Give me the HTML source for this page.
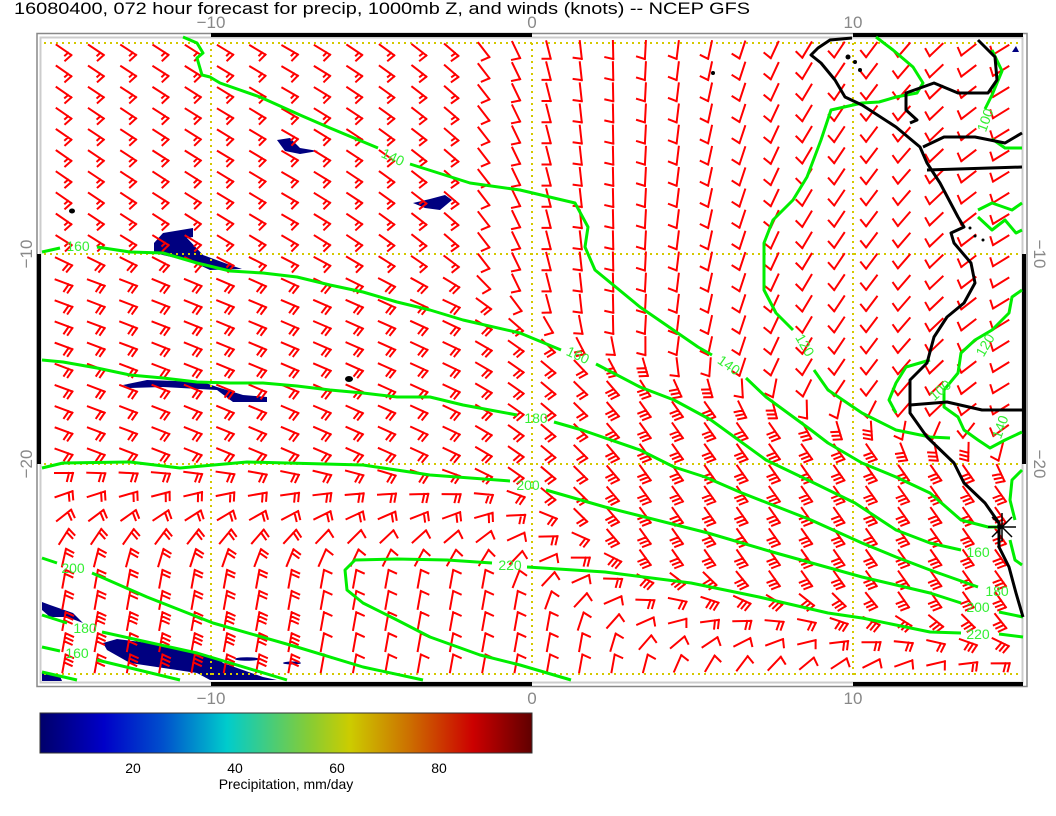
<!DOCTYPE html>
<html><head><meta charset="utf-8">
<style>
html,body{margin:0;padding:0;background:#fff;}
svg{display:block;font-family:"Liberation Sans",Arial,sans-serif;}
</style></head>
<body>
<svg id="s" width="1056" height="816" viewBox="0 0 1056 816" xmlns="http://www.w3.org/2000/svg">
<defs>
<linearGradient id="cb" x1="0" x2="1" y1="0" y2="0">
<stop offset="0" stop-color="#00006a"/>
<stop offset="0.13" stop-color="#0000c8"/>
<stop offset="0.25" stop-color="#0050cc"/>
<stop offset="0.38" stop-color="#00cccc"/>
<stop offset="0.48" stop-color="#50cc70"/>
<stop offset="0.55" stop-color="#88cc33"/>
<stop offset="0.63" stop-color="#cccc00"/>
<stop offset="0.75" stop-color="#cc7000"/>
<stop offset="0.88" stop-color="#cc0000"/>
<stop offset="1" stop-color="#600000"/>
</linearGradient>
</defs>
<rect width="1056" height="816" fill="#fff"/>
<text x="14" y="14" font-size="17" textLength="736" lengthAdjust="spacingAndGlyphs">16080400, 072 hour forecast for precip, 1000mb Z, and winds (knots) -- NCEP GFS</text>

<rect x="37" y="33.5" width="990" height="653" fill="none" stroke="#888" stroke-width="1.5"/>
<rect x="40.5" y="37.5" width="982" height="645" fill="none" stroke="#ccc" stroke-width="2"/>
<g fill="#000">
<rect x="211" y="33" width="321" height="4"/>
<rect x="853" y="33" width="170" height="4"/>
<rect x="211" y="682" width="321" height="4"/>
<rect x="853" y="682" width="170" height="4"/>
<rect x="37" y="254" width="4" height="210"/>
<rect x="1022" y="254" width="4" height="210"/>
</g>
<g fill="#888" font-size="17" text-anchor="middle">
<text x="211" y="28">−10</text><text x="532" y="28">0</text><text x="853" y="28">10</text>
<text x="211" y="704">−10</text><text x="532" y="704">0</text><text x="853" y="704">10</text>
<text transform="translate(32,254) rotate(-90)">−10</text>
<text transform="translate(32,464) rotate(-90)">−20</text>
<text transform="translate(1034,254) rotate(90)">−10</text>
<text transform="translate(1034,464) rotate(90)">−20</text>
</g>

<g fill="#000080">
<polygon points="277,140 290,138 300,148 318,151 300,154 285,151"/>
<polygon points="413,203 430,199 445,195 452,200 440,210 425,208"/>
<polygon points="154,243 163,233 193,228 193,237 187,238 203,255 230,265 242,269 210,270 193,262 154,253"/>
<polygon points="123,385 147,380 203,382 217,387 243,395 267,397 267,402 233,402 217,390 163,387 130,388"/>
<polygon points="103,643 117,639 163,645 220,660 223,663 263,677 277,680 210,680 197,673 130,663 107,650"/>
<polygon points="42,602 50,605 73,613 83,623 67,617 50,617 42,610"/>
<ellipse cx="247" cy="659" rx="12" ry="1.8"/>
<ellipse cx="292" cy="663" rx="9" ry="1.5"/>
<polygon points="42,672 60,676 62,681 42,681"/>
<ellipse cx="349" cy="379" rx="4" ry="3" fill="#000"/>
<ellipse cx="72" cy="211" rx="3" ry="2.5" fill="#000"/>
<polygon points="1012,52 1016,46 1019,52"/>
</g>

<g stroke="#d4c800" stroke-width="2" stroke-dasharray="2,4" fill="none">
<line x1="44" y1="43" x2="1020" y2="43"/>
<line x1="44" y1="254" x2="1020" y2="254"/>
<line x1="44" y1="464" x2="1020" y2="464"/>
<line x1="44" y1="674" x2="1020" y2="674"/>
<line x1="211" y1="43" x2="211" y2="676"/>
<line x1="532" y1="43" x2="532" y2="676"/>
<line x1="853" y1="43" x2="853" y2="676"/>
</g>

<g id="barbs" stroke="#ff0000" stroke-width="2" fill="none" stroke-linecap="square"></g>

<g stroke="#00ee00" stroke-width="3" fill="none" stroke-linejoin="round">
<polyline points="183,37 197,43 203,53 197,58 202,75 210,77 220,83 260,97 300,115 330,128 378,148"/>
<polyline points="410,164 470,183 520,190 575,203 588,227 585,247 595,270 640,307 698,347 712,355"/>
<polyline points="746,378 766,397 811,430 828,443 862,463 896,477 930,493 961,520 988,527 999,527"/>
<polyline points="876,37 893,50 913,67 923,83 917,93 896,97 879,102 862,103 831,110 821,140 807,177 793,200 773,220 764,243 764,290 776,313 793,330"/>
<polyline points="814,370 828,390 862,413 896,430 930,437 950,438"/>
<polyline points="42,252 60,248"/>
<polyline points="97,247 130,252 163,253 197,263 230,271 263,273 297,277 330,285 363,292 397,302 430,310 463,320 520,333 561,350"/>
<polyline points="596,364 640,387 674,400 711,420 766,460 814,483 855,503 896,530 930,543 961,550"/>
<polyline points="42,360 63,362 97,368 130,375 163,378 197,382 230,383 263,383 297,386 330,390 363,393 397,397 430,397 463,405 517,415"/>
<polyline points="554,422 582,430 640,450 674,467 705,477 742,493 811,520 862,543 896,557 930,570 978,587"/>
<polyline points="42,468 63,463 130,462 180,468 247,462 363,465 430,475 510,481"/>
<polyline points="546,490 605,507 708,533 776,553 862,577 930,593 961,603"/>
<polyline points="999,612 1023,617"/>
<polyline points="492,563 447,560 397,559 355,560 345,570 347,590 363,603 397,620 430,637 480,655 520,665 571,680"/>
<polyline points="527,567 605,572 691,583 759,597 828,613 862,618 930,632 961,633"/>
<polyline points="999,634 1023,637"/>
<polyline points="42,558 57,563"/>
<polyline points="92,573 147,597 213,623 297,647 363,667 423,680"/>
<polyline points="42,615 67,623"/>
<polyline points="102,632 197,653 287,680"/>
<polyline points="42,647 60,651"/>
<polyline points="97,660 180,680"/>
<polyline points="42,672 77,680"/>
<polyline points="992,50 1002,71 992,95 985,109"/>
<polyline points="992,139 1005,148 1022,148"/>
<polyline points="978,210 992,203 1012,210 1022,203"/>
<polyline points="978,217 992,230 1005,220 1016,233 1022,230"/>
<polyline points="1022,290 1012,297 1009,313 992,330 975,340 961,353 958,373 944,390 944,407 958,417 964,430 978,440 990,448 1005,440 1022,432"/>
<polyline points="930,360 906,367 896,383 889,400 896,413"/>
<polyline points="1022,470 1012,480 1010,500 1015,520"/>
<polyline points="1010,540 1015,560 1022,565"/>
</g>
<g fill="#33ee33" font-size="14" text-anchor="middle">
<text x="393" y="162" transform="rotate(25 393 157)">140</text>
<text x="729" y="370" transform="rotate(35 729 365)">140</text>
<text x="805" y="350" transform="rotate(60 805 345)">120</text>
<text x="78" y="251">160</text>
<text x="578" y="360" transform="rotate(25 578 355)">160</text>
<text x="978" y="557">160</text>
<text x="536" y="423">180</text>
<text x="997" y="596">180</text>
<text x="528" y="490">200</text>
<text x="978" y="612">200</text>
<text x="510" y="570">220</text>
<text x="978" y="639">220</text>
<text x="73" y="573">200</text>
<text x="85" y="633">180</text>
<text x="77" y="658">160</text>
<text x="985" y="125" transform="rotate(-70 985 120)">100</text>
<text x="985" y="350" transform="rotate(-60 985 345)">120</text>
<text x="940" y="395" transform="rotate(-40 940 390)">100</text>
<text x="1000" y="432" transform="rotate(-70 1000 427)">140</text>
</g>

<g stroke="#000" stroke-width="3" fill="none" stroke-linejoin="round">
<polyline points="852,38 830,40 818,48 811,55 821,63 835,80 845,97 862,105 896,127 920,147 927,163 940,183 958,217 964,227 951,233 954,243 971,263 975,283 964,303 947,317 934,337 927,363 910,380 910,413 927,437 954,463 964,483 985,503 999,523 999,547 1009,567 1016,593 1023,617"/>
<polyline points="978,40 995,57 997,80 988,93 958,93 934,83 906,93 906,110 917,120 910,123"/>
<polyline points="927,170 1022,167"/>
<polyline points="923,147 944,137 975,137 1005,143 1022,133"/>
<polyline points="910,405 947,402 982,410 1022,410"/>
</g>
<g fill="#000">
<circle cx="848" cy="57" r="2.5"/><circle cx="855" cy="62" r="2"/><circle cx="860" cy="70" r="2"/><circle cx="713" cy="73" r="2"/>
<circle cx="970" cy="228" r="1.5"/><circle cx="975" cy="236" r="1.5"/><circle cx="983" cy="240" r="1.5"/>
</g>
<g stroke="#000" stroke-width="1.5">
<line x1="988" y1="527" x2="1016" y2="527"/><line x1="1002" y1="513" x2="1002" y2="541"/>
<line x1="992" y1="517" x2="1012" y2="537"/><line x1="992" y1="537" x2="1012" y2="517"/>
</g>

<rect x="40" y="713" width="492" height="40" fill="url(#cb)" stroke="#333" stroke-width="1"/>
<g font-size="14" text-anchor="middle" fill="#000">
<text x="133" y="773">20</text><text x="235" y="773">40</text><text x="337" y="773">60</text><text x="439" y="773">80</text>
<text x="286" y="789">Precipitation, mm/day</text>
</g>
</svg>
<script>
(function(){
var g=document.getElementById('barbs');
function lerpPts(pts,x){if(x<=pts[0][0])return pts[0][1];for(var i=1;i<pts.length;i++){if(x<=pts[i][0]){var t=(x-pts[i-1][0])/(pts[i][0]-pts[i-1][0]);return pts[i-1][1]+t*(pts[i][1]-pts[i-1][1]);}}return pts[pts.length-1][1];}
function cl(v){return v<0?0:v>1?1:v;}
var U=[[40,35],[300,30],[450,40],[560,80],[620,90],[700,100],[800,120],[900,130],[1010,150]];
var Y0=[[40,230],[450,250],[600,330],[900,410],[1010,430]];
var BASE=[[40,20],[450,25],[650,55],[1010,55]];
var YS=[[40,450],[500,470],[650,560],[1010,620]];
var s='';
for(var j=0;j<30;j++){for(var i=0;i<30;i++){
var x=64+i*32.3, y=50+j*21.15;
var y0=lerpPts(Y0,x);
var w=cl((y-y0)/50);
var ys=lerpPts(YS,x);
var t=cl((y-ys)/110);
var low=lerpPts(BASE,x)+( -80-lerpPts(BASE,x))*t;
var a=lerpPts(U,x)*(1-w)+low*w;
var n, half=false;
if(w<0.5){n=1;half=(x<480);}
else if(x>600){n=(t<0.3)?3:(t<0.5?2:1);}
else if(t<0.5){n=2;} else {n=(x<300)?2:1;}
if(y>560 && x<300) n=(y>600)?3:2;
var r=a*Math.PI/180, dx=Math.cos(r), dy=Math.sin(r);
var fx=-dy, fy=dx;
var x1=x-dx*9, y1=y-dy*9, x2=x+dx*9, y2=y+dy*9;
s+='M'+x1.toFixed(1)+' '+y1.toFixed(1)+'L'+x2.toFixed(1)+' '+y2.toFixed(1);
for(var k=0;k<n;k++){var bx=x2-dx*4*k, by=y2-dy*4*k;
s+='M'+bx.toFixed(1)+' '+by.toFixed(1)+'l'+((fx*8-dx*2)).toFixed(1)+' '+((fy*8-dy*2)).toFixed(1);}
if(half){var bx=x2-dx*4*n, by=y2-dy*4*n;s+='M'+bx.toFixed(1)+' '+by.toFixed(1)+'l'+(fx*4-dx).toFixed(1)+' '+(fy*4-dy).toFixed(1);}
}}
var p=document.createElementNS('http://www.w3.org/2000/svg','path');p.setAttribute('d',s);g.appendChild(p);
})();
</script>
</body></html>
